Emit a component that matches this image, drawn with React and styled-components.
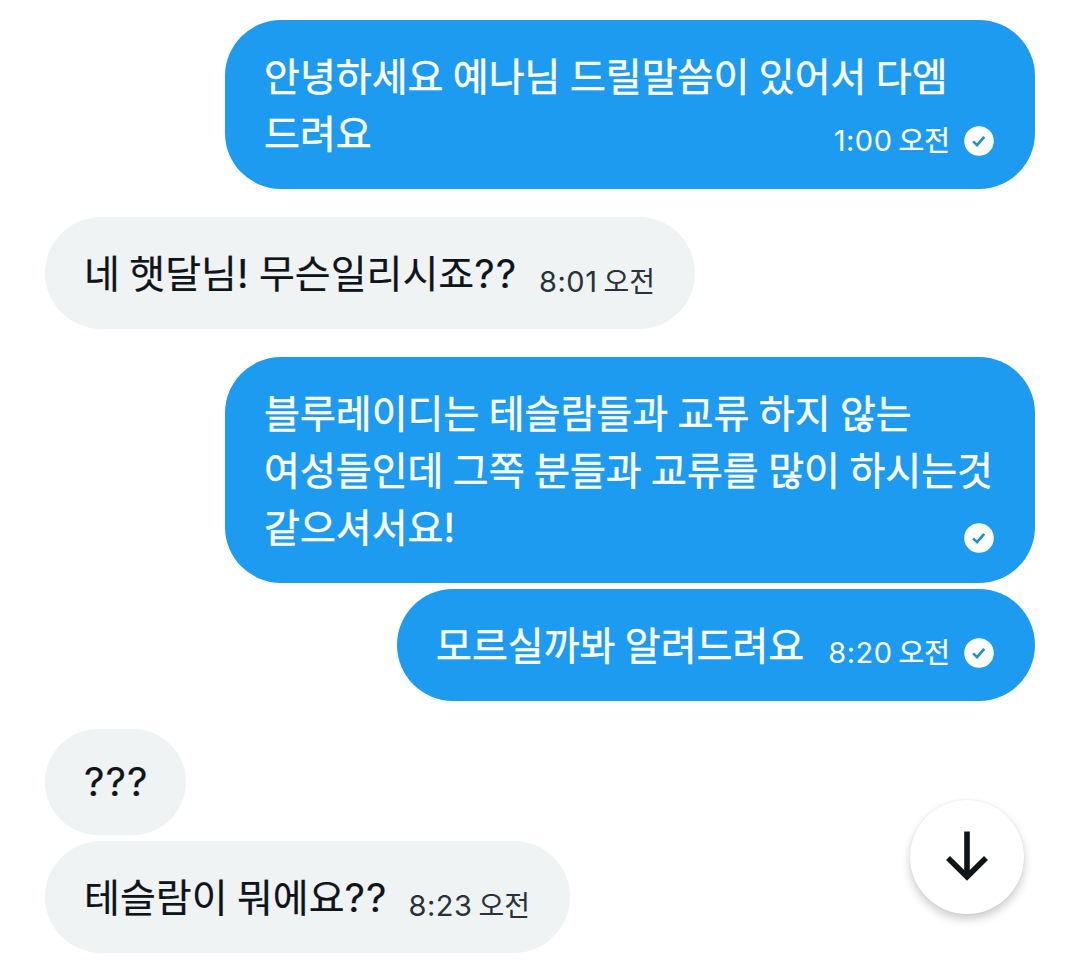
import React from 'react';
import styled, { createGlobalStyle } from 'styled-components';

const GlobalStyle = createGlobalStyle`
  body {
    margin: 0;
    background-color: #fff;
    font-family: 'Noto Sans CJK KR', 'Noto Sans', sans-serif;
  }
`;

const Screen = styled.main`
  box-sizing: border-box;
  display: flex;
  flex-direction: column;
  gap: 28px;
  width: 1080px;
  height: 964px;
  padding: 20px 45px 0;
  overflow: hidden;
`;

const Group = styled.section`
  display: flex;
  flex-direction: column;
  align-items: ${({ $mine }) => ($mine ? 'flex-end' : 'flex-start')};
  gap: 6px;
`;

const Bubble = styled.div`
  box-sizing: border-box;
  display: grid;
  width: ${({ $width }) => $width}px;
  height: ${({ $height }) => $height}px;
  padding: 26px 40px 27px 39px;
  border-radius: 56px;
  color: ${({ $mine }) => ($mine ? '#fff' : '#0f1419')};
  background-color: ${({ $mine }) => ($mine ? '#1d9bf0' : '#eff3f4')};
`;

const Text = styled.div`
  grid-area: 1 / 1;
  display: flex;
  flex-direction: column;
  align-items: flex-start;
  margin-top: ${({ $latin }) => ($latin ? '-4px' : '0')};
  font-size: 39px;
  line-height: 57px;
  word-spacing: 0.7px;
  white-space: pre;
  -webkit-text-stroke: ${({ $mine }) => ($mine ? '0.5px' : '0.2px')};
`;

const Line = styled.p`
  margin: 0;
`;

const Marks = styled.span`
  font-family: 'Inter', sans-serif;
  font-size: 40px;
  line-height: 1;
  letter-spacing: 1px;
`;

const Meta = styled.div`
  grid-area: 1 / 1;
  align-self: end;
  justify-self: end;
  display: flex;
  align-items: center;
  gap: 14px;
  height: 30px;
  margin-bottom: ${({ $mine, $timed }) => ($mine && $timed ? '6px' : $mine ? '3px' : '5px')};
  color: ${({ $mine }) => ($mine ? '#fff' : '#29323a')};
  font-size: 28px;
  line-height: 30px;
  white-space: pre;
`;

const Time = styled.span`
  display: flex;
  align-items: baseline;
  gap: 6px;
  margin-top: -2px;
  -webkit-text-stroke: ${({ $mine }) => ($mine ? '0.3px' : '0')};
`;

const Clock = styled.span`
  font-family: 'Inter', sans-serif;
  font-size: 29px;
  font-weight: 400;
  letter-spacing: 0.5px;
  -webkit-text-stroke: 0;
`;

const CheckIcon = styled.svg`
  display: block;
  width: 30px;
  height: 30px;
  margin-right: 1px;
`;

const ScrollButton = styled.button`
  position: absolute;
  top: 800px;
  left: 910px;
  display: flex;
  align-items: center;
  justify-content: center;
  width: 114px;
  height: 114px;
  padding: 0;
  border: 0;
  border-radius: 50%;
  background-color: #fff;
  box-shadow: 0 5px 10px rgba(0, 0, 0, 0.2), 0 0 2px rgba(0, 0, 0, 0.08);
`;

const groups = [
  {
    mine: true,
    messages: [
      { text: '안녕하세요 예나님 드릴말씀이 있어서 다엠\n드려요', clock: '1:00', width: 810, height: 169 },
    ],
  },
  {
    mine: false,
    messages: [{ text: '네 햇달님! 무슨일리시죠??', clock: '8:01', width: 650, height: 112 }],
  },
  {
    mine: true,
    messages: [
      {
        text: '블루레이디는 테슬람들과 교류 하지 않는\n여성들인데 그쪽 분들과 교류를 많이 하시는것\n같으셔서요!',
        width: 810,
        height: 226,
      },
      { text: '모르실까봐 알려드려요', clock: '8:20', width: 638, height: 112 },
    ],
  },
  {
    mine: false,
    messages: [
      { text: '???', width: 141, height: 106, latin: true },
      { text: '테슬람이 뭐에요??', clock: '8:23', width: 525, height: 112 },
    ],
  },
];

function Check() {
  return (
    <CheckIcon viewBox="0 0 30 30">
      <circle cx="15" cy="15" r="14.8" fill="#fff" />
      <path d="M9.1 15.4 13.1 19.2 20.2 10.8" fill="none" stroke="#1d8fdc" strokeWidth="2.6" />
    </CheckIcon>
  );
}

function Message({ message, mine }) {
  const { text, clock, width, height, latin } = message;

  return (
    <Bubble $mine={mine} $width={width} $height={height}>
      <Text $mine={mine} $latin={latin}>
        {text.split('\n').map((line) => (
          <Line key={line}>
            {line.split(/([?!]+)/).map((part, i) => (i % 2 ? <Marks key={i}>{part}</Marks> : part))}
          </Line>
        ))}
      </Text>
      {clock || mine ? (
        <Meta $mine={mine} $timed={Boolean(clock)}>
          {clock ? (
            <Time $mine={mine}>
              <Clock>{clock}</Clock>
              <span>오전</span>
            </Time>
          ) : null}
          {mine ? <Check /> : null}
        </Meta>
      ) : null}
    </Bubble>
  );
}

function App() {
  return (
    <>
      <GlobalStyle />
      <Screen>
        {groups.map((group, i) => (
          <Group key={i} $mine={group.mine}>
            {group.messages.map((message) => (
              <Message key={message.text} message={message} mine={group.mine} />
            ))}
          </Group>
        ))}
      </Screen>
      <ScrollButton aria-label="아래로">
        <svg width="44" height="52" viewBox="0 0 44 52" fill="none" stroke="#0f1419" strokeWidth="5.6">
          <path d="M22 .5V46M3 27 22 45.8 41 27" />
        </svg>
      </ScrollButton>
    </>
  );
}

export default App;
